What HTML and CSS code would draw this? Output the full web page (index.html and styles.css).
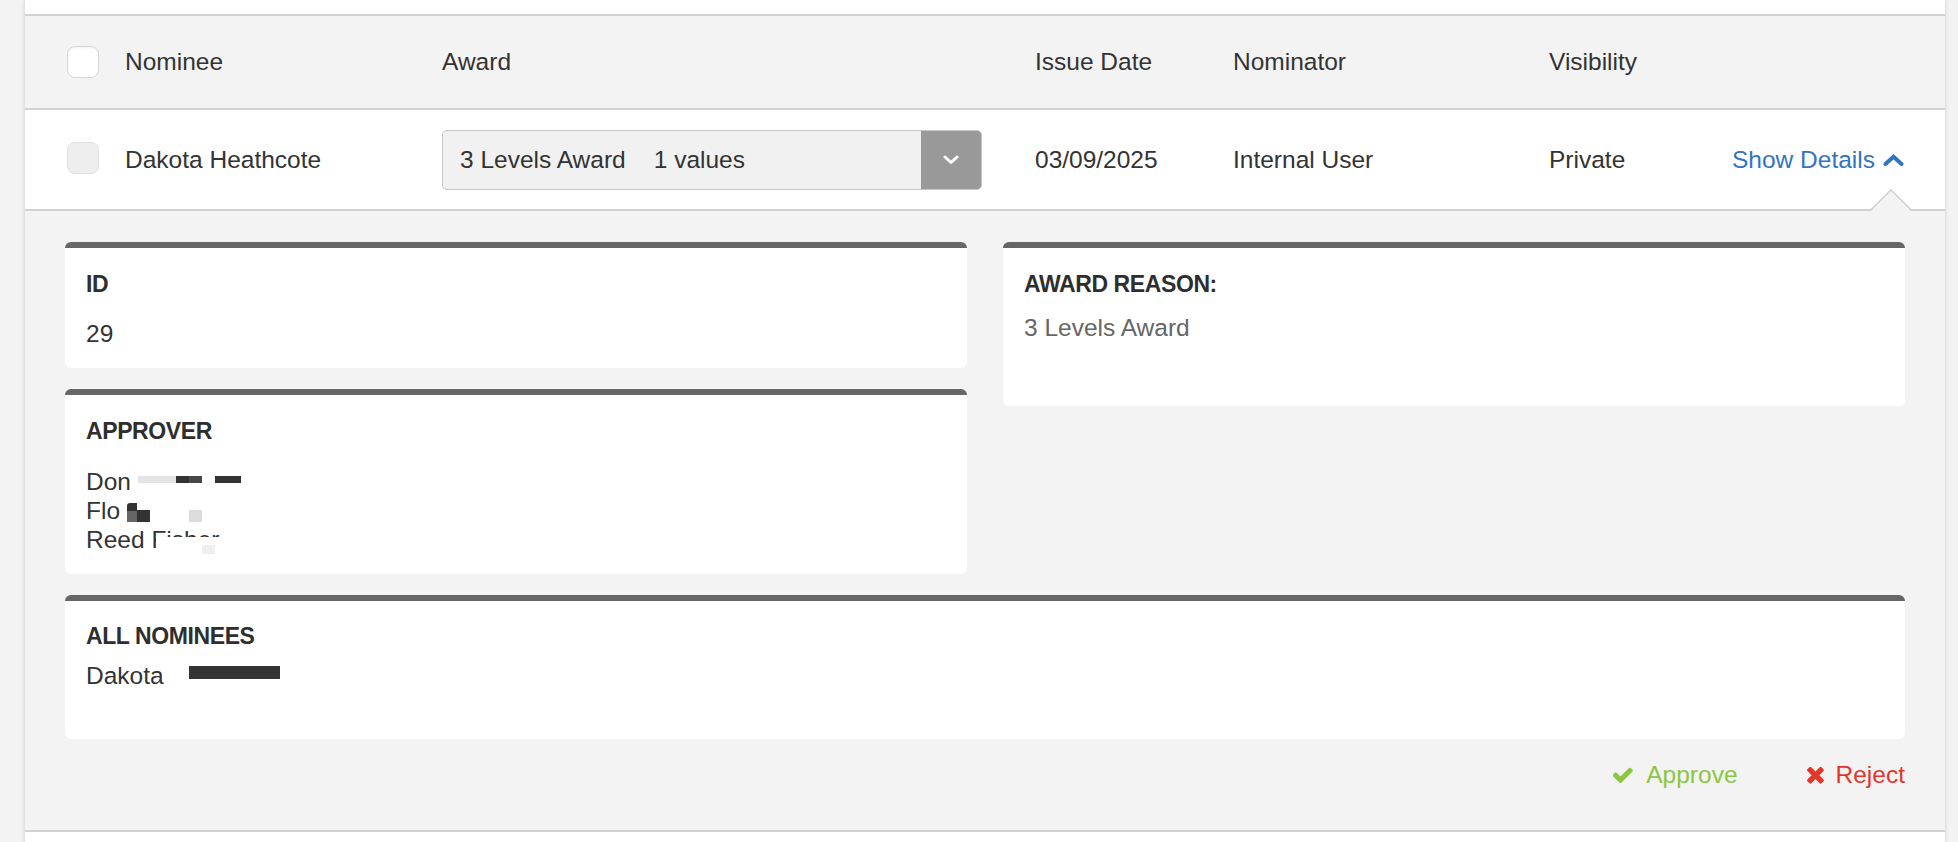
FILE: index.html
```html
<!DOCTYPE html>
<html lang="en">
<head>
<meta charset="utf-8">
<title>Nominations</title>
<link rel="stylesheet" href="styles.css">
</head>
<body>
<div class="table">
  <div class="prev-row"></div>

  <div class="row head">
    <span class="cb cb-white"></span>
    <span>Nominee</span>
    <span>Award</span>
    <span>Issue Date</span>
    <span>Nominator</span>
    <span>Visibility</span>
    <span></span>
  </div>

  <div class="row item">
    <span class="cb cb-disabled"></span>
    <span>Dakota Heathcote</span>
    <div class="select">
      <div class="select-value"><span>3 Levels Award</span><span class="count">1 values</span></div>
      <div class="select-btn">
        <svg width="16" height="10" viewBox="0 0 16 10"><path d="M2 2 L8 7.5 L14 2" fill="none" stroke="#fff" stroke-width="3" stroke-linecap="round" stroke-linejoin="round"/></svg>
      </div>
    </div>
    <span>03/09/2025</span>
    <span>Internal User</span>
    <span>Private</span>
    <a class="toggle" href="#">Show Details
      <svg width="21" height="12" viewBox="0 0 21 12"><path d="M2.5 10 L10.5 2.8 L18.5 10" fill="none" stroke="#3274c2" stroke-width="4" stroke-linecap="round" stroke-linejoin="miter"/></svg>
    </a>
    <svg class="notch" width="40" height="22" viewBox="0 0 40 22"><polygon points="0,22 20,2 40,22" fill="#f3f3f3"/><polyline points="0,21 20,1 40,21" fill="none" stroke="#d2d2d2" stroke-width="1.6"/></svg>
  </div>

  <div class="details">
    <div class="details-grid">
      <div class="col-left">
        <div class="card card-id">
          <div class="label">ID</div>
          <div class="value">29</div>
        </div>
        <div class="card card-approver">
          <div class="label">APPROVER</div>
          <div class="lines">
            <div>Don <span class="blk blk-gap"></span><span class="blk blk-light w38"></span><span class="blk blk-dark w13"></span><span class="blk blk-mid w13"></span><span class="blk blk-dark w26 ml13"></span></div>
            <div>Flo <span class="blk2 blk2-f"></span><span class="blk2 blk2-dark"></span><span class="blk2 blk2-light"></span></div>
            <div>Reed <span class="partial">Fisher</span></div>
          </div>
        </div>
      </div>
      <div class="card card-reason">
        <div class="label">AWARD REASON:</div>
        <div class="value muted">3 Levels Award</div>
      </div>
    </div>

    <div class="card card-nominees">
      <div class="label">ALL NOMINEES</div>
      <div class="value">Dakota<span class="bar"></span></div>
    </div>

    <div class="actions">
      <a class="action approve" href="#">
        <svg width="20" height="16" viewBox="140 330 1540 1140"><path fill="#8cc63f" d="M1671 566q0 40-28 68l-724 724-136 136q-28 28-68 28t-68-28l-136-136-362-362q-28-28-28-68t28-68l136-136q28-28 68-28t68 28l294 295 656-657q28-28 68-28t68 28l136 136q28 28 28 68z"/></svg>
        Approve
      </a>
      <a class="action reject" href="#">
        <svg width="17" height="17" viewBox="300 380 1195 1195"><path fill="#e5352b" d="M1490 1322q0 40-28 68l-136 136q-28 28-68 28t-68-28l-294-294-294 294q-28 28-68 28t-68-28l-136-136q-28-28-28-68t28-68l294-294-294-294q-28-28-28-68t28-68l136-136q28-28 68-28t68 28l294 294 294-294q28-28 68-28t68 28l136 136q28 28 28 68t-28 68l-294 294 294 294q28 28 28 68z"/></svg>
        Reject
      </a>
    </div>
  </div>

  <div class="next-row"></div>
</div>
</body>
</html>
```

FILE: styles.css
```css
* { box-sizing: border-box; }

html, body {
  margin: 0;
  padding: 0;
  height: 100%;
}

body {
  background: #f3f3f3;
  font-family: "Liberation Sans", Arial, Helvetica, sans-serif;
  font-size: 24.5px;
  color: #333;
  overflow: hidden;
}

a { text-decoration: none; }

.table {
  margin-left: 25px;
  width: 1920px;
  min-height: 100%;
  background: #fff;
  box-shadow: 0 0 4px rgba(0, 0, 0, 0.18);
}

.prev-row {
  height: 16px;
  border-bottom: 2px solid #d2d2d2;
}

.row {
  display: grid;
  grid-template-columns: 58px 317px 593px 198px 316px 182px 1fr;
  align-items: center;
  padding-left: 42px;
  border-bottom: 2px solid #d2d2d2;
}

.head {
  height: 94px;
  background: #f3f3f3;
}

.item {
  position: relative;
  height: 101px;
  background: #fff;
}

.cb {
  display: block;
  width: 32px;
  height: 32px;
  border-radius: 8px;
}

.cb-white {
  background: #fff;
  border: 1px solid #d6d6d6;
  box-shadow: inset 0 1px 2px rgba(0, 0, 0, 0.06);
}

.cb-disabled {
  background: #eeeeee;
  border: 1px solid #e0e0e0;
  margin-top: -4px;
}

.select {
  display: flex;
  width: 540px;
  height: 60px;
  border: 1px solid #c6c6c6;
  border-radius: 5px;
  background: #f1f1f1;
  overflow: hidden;
}

.select-value {
  flex: 1;
  display: flex;
  align-items: center;
  padding-left: 17px;
}

.count { margin-left: 28px; }

.select-btn {
  width: 60px;
  background: #999;
  display: flex;
  align-items: center;
  justify-content: center;
}

.toggle {
  justify-self: end;
  padding-right: 41px;
  color: #3274c2;
  display: flex;
  align-items: center;
  gap: 8px;
}

.notch {
  position: absolute;
  right: 34px;
  bottom: -2px;
  display: block;
}

.details {
  background: #f3f3f3;
  padding: 31px 40px 43px 40px;
  border-bottom: 2px solid #d2d2d2;
}

.details-grid {
  display: grid;
  grid-template-columns: 1fr 1fr;
  column-gap: 36px;
  align-items: start;
}

.col-left {
  display: flex;
  flex-direction: column;
  gap: 21px;
}

.card {
  background: #fff;
  border-top: 6px solid #666;
  border-radius: 6px;
  padding: 22px 21px 19px;
}

.label {
  font-weight: 700;
  font-size: 23px;
  line-height: 28px;
  letter-spacing: -0.4px;
  margin-bottom: 21px;
  color: #2e2e2e;
}

.value { line-height: 30px; }

.muted { color: #666; }

.card-approver { padding-bottom: 20px; }
.card-approver .label { margin-bottom: 22px; }
.lines { line-height: 29px; }

.card-reason { padding-bottom: 63px; }
.card-reason .label { margin-bottom: 15px; }

.card-nominees {
  margin-top: 21px;
  padding-top: 21px;
  padding-bottom: 48px;
}
.card-nominees .label { margin-bottom: 11px; }

.bar {
  display: inline-block;
  width: 91px;
  height: 13px;
  margin-left: 25px;
  margin-bottom: 5px;
  background: #333;
}

.blk {
  display: inline-block;
  height: 7px;
  margin-bottom: 7px;
}
.blk-gap { width: 0; }
.blk-light { background: #e4e4e4; }
.blk-dark { background: #333; }
.blk-mid { background: #474747; }
.w13 { width: 13px; }
.w26 { width: 26px; }
.w38 { width: 38px; }
.ml13 { margin-left: 13px; }

.blk2 {
  display: inline-block;
  height: 12px;
  margin-bottom: -3px;
}
.blk2-f {
  width: 10px;
  height: 19px;
  background: linear-gradient(#333 0 40%, #666 40% 100%);
  border-radius: 3px 0 0 0;
}
.blk2-dark { width: 13px; background: #333; }
.blk2-light { width: 13px; margin-left: 39px; background: #dcdcdc; }

.partial {
  position: relative;
  display: inline-block;
  line-height: 29px;
}
.partial::after {
  content: "";
  position: absolute;
  left: 5px;
  right: -4px;
  top: 12px;
  bottom: -2px;
  background: #fff;
}
.partial::before {
  content: "";
  position: absolute;
  left: 51px;
  width: 13px;
  top: 20px;
  height: 9px;
  background: #efefef;
  z-index: 1;
}

.actions {
  display: flex;
  justify-content: flex-end;
  gap: 69px;
  margin-top: 24px;
  line-height: 24px;
}

.action {
  display: flex;
  align-items: center;
  gap: 13px;
}

.approve { color: #8cc63f; }
.reject { color: #e5352b; gap: 12px; }

.next-row {
  height: 40px;
  background: #fff;
}
```
